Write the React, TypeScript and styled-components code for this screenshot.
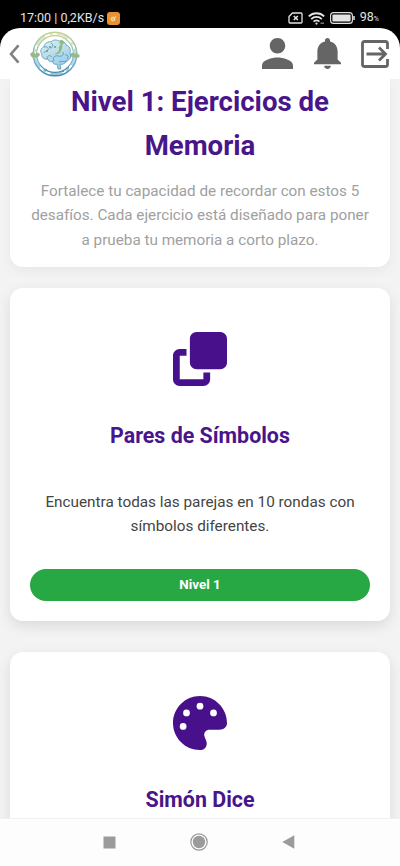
import React from "react";
import styled, { createGlobalStyle } from "styled-components";

const Global = createGlobalStyle`
  * { box-sizing: border-box; }
  body { margin: 0; background: #000; font-family: Roboto, sans-serif; }
  h1, h2, p { margin: 0; }
  svg { display: block; flex: none; }
`;

const Screen = styled.div`
  width: 400px;
  height: 866px;
  overflow: hidden;
  display: flex;
  flex-direction: column;
  background: #000;
`;

const StatusBar = styled.div`
  flex: none;
  height: 28px;
  padding: 8px 21px 0 20px;
  display: flex;
  align-items: center;
  justify-content: space-between;
  color: #e4e4e4;
  font-size: 12.5px;
  line-height: 20px;
`;

const StatusGroup = styled.div<{ $gap: number }>`
  display: flex;
  align-items: center;
  gap: ${(p) => p.$gap}px;
  white-space: nowrap;
`;

const AppBadge = styled.span`
  width: 13px;
  height: 13px;
  border-radius: 3px;
  background: #ea9230;
  display: grid;
  place-items: center;
`;

const Percent = styled.span`
  font-size: 7px;
`;

const Header = styled.header`
  flex: none;
  height: 51px;
  padding: 0 10px 0 9px;
  border-radius: 20px 20px 0 0;
  background: #fff;
  display: flex;
  align-items: center;
  justify-content: space-between;
`;

const HeaderGroup = styled.div<{ $gap: number }>`
  display: flex;
  align-items: center;
  gap: ${(p) => p.$gap}px;
`;

const Content = styled.main`
  flex: 1;
  min-height: 0;
  overflow: hidden;
  padding: 0 10px;
  background: #f3f3f3;
`;

const Intro = styled.section`
  height: 188px;
  padding-top: 1px;
  border-radius: 0 0 13px 13px;
  background: #fff;
  box-shadow: 0 4px 12px rgba(0, 0, 0, 0.05);
  text-align: center;
`;

const Title = styled.h1`
  color: #48158a;
  font-size: 27.6px;
  font-weight: 700;
  line-height: 44.3px;
`;

const Lead = styled.p`
  padding-top: 10px;
  color: #a0a0a0;
  font-size: 15.25px;
  line-height: 24.5px;
  white-space: nowrap;
`;

const Card = styled.section<{ $top: number }>`
  height: 333px;
  margin-top: ${(p) => p.$top}px;
  padding: 44px 20px 20px;
  border-radius: 13px;
  background: #fff;
  box-shadow: 0 5px 14px rgba(0, 0, 0, 0.1);
  display: flex;
  flex-direction: column;
  align-items: center;
  text-align: center;
`;

const CardTitle = styled.h2`
  margin-top: 33px;
  color: #48158a;
  font-size: 21.4px;
  font-weight: 700;
  line-height: 34px;
`;

const CardText = styled.p`
  margin-top: 37px;
  color: #444;
  font-size: 15.3px;
  line-height: 24.4px;
  white-space: nowrap;
`;

const LevelButton = styled.button`
  width: 100%;
  height: 32px;
  margin-top: auto;
  padding: 0;
  border: 0;
  border-radius: 16px;
  background: #28a745;
  color: #fff;
  font: 700 13.4px/32px Roboto, sans-serif;
`;

const NavBar = styled.nav`
  flex: none;
  height: 48px;
  padding: 0 105px 1px 103px;
  border-top: 1px solid #f1f1f1;
  background: #fdfdfd;
  display: flex;
  align-items: center;
  justify-content: space-between;
`;

const SimIcon = () => (
  <svg width="15" height="12" viewBox="0 0 15 12" fill="none" stroke="#e4e4e4">
    <path d="M4.5 1H13q1 0 1 1v8q0 1-1 1H2q-1 0-1-1V4.5z" strokeWidth="1.3" />
    <path d="m5.8 4 4 4m0-4-4 4" strokeWidth="1.6" />
  </svg>
);

const WifiIcon = () => (
  <svg width="17" height="13" viewBox="0 0 17 13" fill="none" stroke="#e4e4e4" strokeWidth="1.8">
    <path d="M.8 4.4a11 11 0 0 1 15.4 0M3.2 7.1a7.6 7.6 0 0 1 10.6 0M5.6 9.7a4 4 0 0 1 5.8 0" />
    <circle cx="8.5" cy="11.6" r="1.1" fill="#e4e4e4" stroke="none" />
    <path d="M12.5 11.2H16" strokeWidth="1.5" stroke="#777" />
  </svg>
);

const BatteryIcon = () => (
  <svg width="25" height="12" viewBox="0 0 25 12">
    <rect x=".6" y=".6" width="21.8" height="10.8" rx="3" fill="none" stroke="#e4e4e4" strokeWidth="1.1" />
    <rect x="2.4" y="2.4" width="18.2" height="7.2" rx="1" fill="#e4e4e4" />
    <path d="M24 4v4" stroke="#e4e4e4" strokeWidth="1.5" />
  </svg>
);

const BackIcon = () => (
  <svg width="11" height="20" viewBox="0 0 11 20" fill="none" stroke="#808080" strokeWidth="2.6">
    <path d="M9.5 1.4 2 10l7.5 8.6" />
  </svg>
);

const BrainLogo = () => (
  <svg width="54" height="48" viewBox="0 0 54 48" fill="none">
    <defs>
      <linearGradient id="ring" x1="0" y1="0" x2="0" y2="1">
        <stop offset="0" stopColor="#c3d08f" />
        <stop offset=".42" stopColor="#93bfb0" />
        <stop offset=".75" stopColor="#66a9cb" />
        <stop offset="1" stopColor="#3f8aae" />
      </linearGradient>
      <linearGradient id="brain" x1="0" y1="0" x2=".5" y2="1">
        <stop offset="0" stopColor="#dff0e8" />
        <stop offset="1" stopColor="#9bcdec" />
      </linearGradient>
    </defs>
    <circle cx="27" cy="24" r="21.8" stroke="url(#ring)" strokeWidth="1.5" />
    <circle cx="27" cy="24" r="18.4" stroke="url(#ring)" strokeWidth="1.1" />
    <circle cx="27" cy="24" r="20.1" stroke="url(#ring)" strokeWidth="2.2" strokeDasharray="12 5 3 4" opacity=".5" />
    <path d="M2 24q3.5-4 5.500 0 3.500-3 4.500 1-3 4-5 2.500-3 1.500-5-3.500zM52 26q-2.500-4-5-2-3-3-5 1 2 3.500 5 2.500 3 1.500 5-1.500z" fill="#9ab98a" />
    <path
      d="M25 31c-3 2-5-.2-5-2-4 1-7-2-6-5-3-3 0-7 2-7 0-4 5-6 7-5 3-3 6-2 8-1 4-1 7 2 7 4 4 1 5 5 4 8 2 4-1 8-4 8-1 3-4 4-6 3l1 5h-3l-1-5c-3 1-5-1-4-3z"
      fill="url(#brain)" stroke="#559bb5" strokeWidth=".8"
    />
    <path
      d="M16 17c3-1 5 1 4 3s-4 1-4 3m7-10c3 2 2 5-1 5m-3 11c0-4 3-4 5-2m2 4c-2-3 1-6 4-5 4 1 6-1 5-4m2 3c3-1 4 2 2 4m-5-14c-2 0-3 2-2 4m-1 13c3-2 6 1 8-1"
      stroke="#4a93b6" strokeWidth=".8"
    />
    <path d="M26 24q4-1 5-4 1.500-3 1.500-7l-2 .5 3.500-4 2.500 4.500-2-.5q0 4.500-1.500 7.500-2 4-7 3z" fill="#8dbb72" />
    <g fill="#5a9caf">
      <circle cx="19" cy="21" r="1" /><circle cx="22" cy="17" r="1" /><circle cx="27" cy="17" r="1" />
      <circle cx="18" cy="40" r="1.2" /><circle cx="35" cy="41" r="1.2" /><circle cx="40" cy="38" r="1" />
    </g>
  </svg>
);

const PersonIcon = () => (
  <svg width="31" height="31" viewBox="4 4 16 16" preserveAspectRatio="none" fill="#656565">
    <path d="M12 12c2.21 0 4-1.79 4-4s-1.79-4-4-4-4 1.79-4 4 1.79 4 4 4zm0 2c-2.67 0-8 1.34-8 4v2h16v-2c0-2.66-5.33-4-8-4z" />
  </svg>
);

const BellIcon = () => (
  <svg width="27" height="31" viewBox="4 2.5 16 19.5" preserveAspectRatio="none" fill="#656565">
    <path d="M12 22c1.1 0 2-.9 2-2h-4c0 1.1.89 2 2 2zm6-6v-5c0-3.07-1.64-5.64-4.5-6.32V4c0-.83-.67-1.5-1.5-1.5s-1.5.67-1.5 1.5v.68C7.63 5.36 6 7.92 6 11v5l-2 2v1h16v-1l-2-2z" />
  </svg>
);

const ExitIcon = () => (
  <svg width="29" height="28" viewBox="0 0 29 28" fill="none" stroke="#656565" strokeWidth="2.8">
    <path d="M26.500 9V3.500q0-2-2-2h-21q-2 0-2 2v21q0 2 2 2h21q2 0 2-2V19" />
    <path d="M5.500 14h19M18 7.500l6.500 6.500-6.500 6.500" />
  </svg>
);

const CloneIcon = () => (
  <svg width="54" height="54" viewBox="0 0 512 512" fill="#48108a">
    <path d="M288 448H64V224h64v-64H64c-35.3 0-64 28.7-64 64v224c0 35.3 28.7 64 64 64h224c35.3 0 64-28.7 64-64v-64h-64v64zm-64-96h224c35.3 0 64-28.7 64-64V64c0-35.3-28.7-64-64-64H224c-35.3 0-64 28.7-64 64v224c0 35.3 28.7 64 64 64z" />
  </svg>
);

const PaletteIcon = () => (
  <svg width="54" height="54" viewBox="0 0 512 512">
    <path
      fill="#48108a"
      d="M512 256v2.7c-.4 36.5-33.6 61.3-70.1 61.3H344c-26.5 0-48 21.5-48 48 0 3.4.4 6.7 1 9.9 2.1 10.2 6.5 20 10.8 29.9 6.1 13.8 12.1 27.5 12.1 42 0 31.8-21.6 60.7-53.4 62-3.5.1-7 .2-10.6.2C114.6 512 0 397.4 0 256S114.6 0 256 0s256 114.6 256 256z"
    />
    <g fill="#fff">
      <circle cx="96" cy="288" r="32" /><circle cx="128" cy="160" r="32" />
      <circle cx="256" cy="96" r="32" /><circle cx="384" cy="160" r="32" />
    </g>
  </svg>
);

export default function App() {
  return (
    <Screen>
      <Global />
      <StatusBar>
        <StatusGroup $gap={3}>
          <span>17:00 | 0,2KB/s</span>
          <AppBadge>
            <svg width="7" height="7" viewBox="0 0 7 7" fill="none" stroke="#fff0d8" strokeWidth=".8">
              <circle cx="3" cy="4" r="1.900" />
              <path d="m2 3.500 1.200 1L6 1.200" />
            </svg>
          </AppBadge>
        </StatusGroup>
        <StatusGroup $gap={5}>
          <SimIcon />
          <WifiIcon />
          <BatteryIcon />
          <span>98<Percent>%</Percent></span>
        </StatusGroup>
      </StatusBar>
      <Header>
        <HeaderGroup $gap={8}>
          <BackIcon />
          <BrainLogo />
        </HeaderGroup>
        <HeaderGroup $gap={20.500}>
          <PersonIcon />
          <BellIcon />
          <ExitIcon />
        </HeaderGroup>
      </Header>
      <Content>
        <Intro>
          <Title>Nivel 1: Ejercicios de<br />Memoria</Title>
          <Lead>
            Fortalece tu capacidad de recordar con estos 5<br />
            desafíos. Cada ejercicio está diseñado para poner<br />
            a prueba tu memoria a corto plazo.
          </Lead>
        </Intro>
        <Card $top={21}>
          <CloneIcon />
          <CardTitle>Pares de Símbolos</CardTitle>
          <CardText>
            Encuentra todas las parejas en 10 rondas con<br />
            símbolos diferentes.
          </CardText>
          <LevelButton>Nivel 1</LevelButton>
        </Card>
        <Card $top={31}>
          <PaletteIcon />
          <CardTitle>Simón Dice</CardTitle>
        </Card>
      </Content>
      <NavBar>
        <svg width="13" height="13" viewBox="0 0 13 13"><path fill="#9b9b9b" d="M.5.5h12v12H.5z" /></svg>
        <svg width="18" height="18" viewBox="0 0 18 18">
          <circle cx="9" cy="9" r="8.2" fill="none" stroke="#999" strokeWidth="1.2" />
          <circle cx="9" cy="9" r="6.2" fill="#9b9b9b" />
        </svg>
        <svg width="13" height="14" viewBox="0 0 13 14"><path fill="#9b9b9b" d="M12.3.2v13.600L.3 7z" /></svg>
      </NavBar>
    </Screen>
  );
}
